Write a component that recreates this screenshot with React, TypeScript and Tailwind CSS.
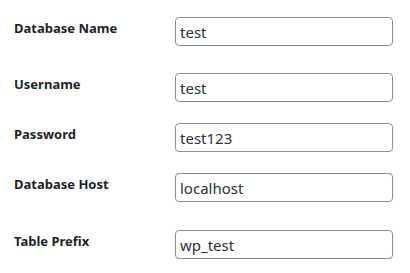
const fields = [
  { label: "Database Name", value: "test", h: "h-[56px]" },
  { label: "Username", value: "test", h: "h-[50px]" },
  { label: "Password", value: "test123", h: "h-[50px]" },
  { label: "Database Host", value: "localhost", h: "h-[57px]" },
  { label: "Table Prefix", value: "wp_test", h: "h-[40px]" },
];

export default function App() {
  return (
    <div className="h-[273px] w-[410px] overflow-hidden bg-white pt-[17px] font-['Noto_Sans',sans-serif]">
      {fields.map((f) => (
        <div key={f.label} className={`flex ${f.h}`}>
          <label className="w-[175px] shrink-0 pl-[14px] pt-[2px] text-[13px] leading-[18px] font-bold text-[#1d2327]">
            {f.label}
          </label>
          <input
            type="text"
            defaultValue={f.value}
            className="h-[29px] w-[218px] rounded-[4px] border border-[#8c8f94] bg-white px-[4px] text-[15px] text-[#2c3338] outline-none"
          />
        </div>
      ))}
    </div>
  );
}
